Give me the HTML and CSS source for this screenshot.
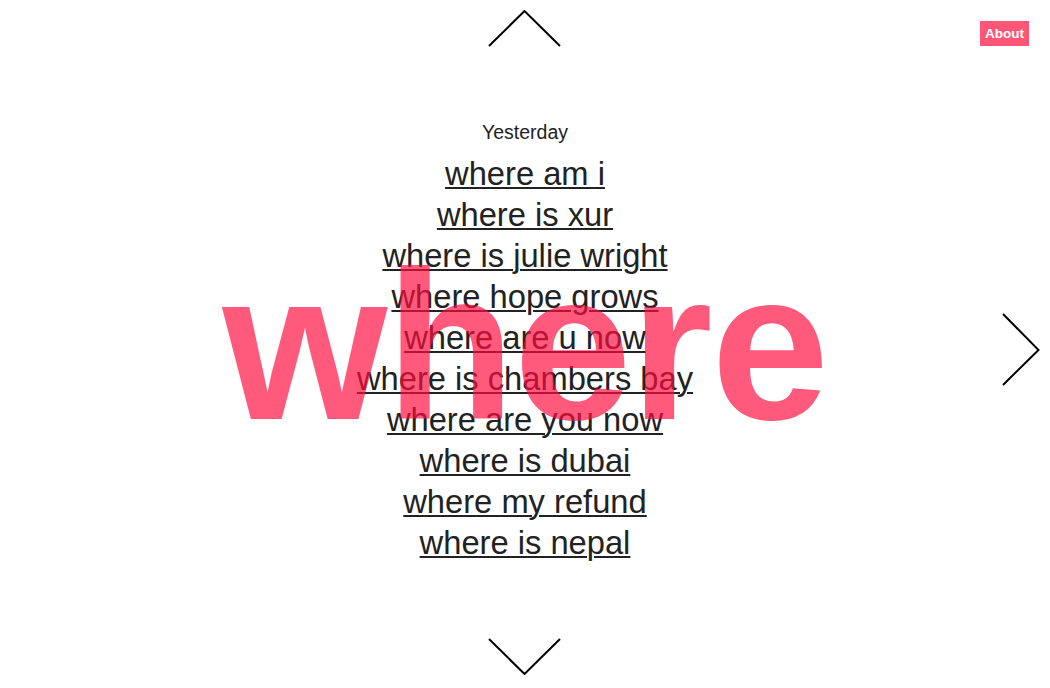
FILE: index.html
```html
<!DOCTYPE html>
<html lang="en">
<head>
<meta charset="utf-8">
<title>where</title>
<link rel="stylesheet" href="styles.css">
</head>
<body>
<div class="page">
  <main class="content">
    <div class="day">Yesterday</div>
    <ul class="queries">
      <li><a href="#">where am i</a></li>
      <li><a href="#">where is xur</a></li>
      <li><a href="#">where is julie wright</a></li>
      <li><a href="#">where hope grows</a></li>
      <li><a href="#">where are u now</a></li>
      <li><a href="#">where is chambers bay</a></li>
      <li><a href="#">where are you now</a></li>
      <li><a href="#">where is dubai</a></li>
      <li><a href="#">where my refund</a></li>
      <li><a href="#">where is nepal</a></li>
    </ul>
  </main>
  <div class="big-word">where</div>
  <a class="nav nav-up" href="#" aria-label="Previous day">
    <svg width="74" height="38" viewBox="0 0 74 38"><polyline points="1,36 36.5,1 72,36" fill="none" stroke="#000" stroke-width="2"/></svg>
  </a>
  <a class="nav nav-down" href="#" aria-label="Next day">
    <svg width="74" height="38" viewBox="0 0 74 38"><polyline points="1,2 36.5,37 72,2" fill="none" stroke="#000" stroke-width="2"/></svg>
  </a>
  <a class="nav nav-right" href="#" aria-label="Next word">
    <svg width="42" height="76" viewBox="0 0 42 76"><polyline points="3,2 38.5,38 3,73" fill="none" stroke="#000" stroke-width="2"/></svg>
  </a>
  <a class="about" href="#">About</a>
</div>
</body>
</html>
```

FILE: styles.css
```css
html, body {
  margin: 0;
  padding: 0;
  background: #fff;
}

body {
  font-family: "Liberation Sans", Arial, Helvetica, sans-serif;
  color: #222;
}

.page {
  position: relative;
  width: 100%;
  height: 688px;
  overflow: hidden;
}

.content {
  height: 100%;
  display: flex;
  flex-direction: column;
  align-items: center;
  justify-content: center;
  padding-bottom: 14px;
  box-sizing: border-box;
}

.day {
  font-size: 19.5px;
  line-height: 41px;
}

.queries {
  list-style: none;
  margin: 0;
  padding: 0;
  text-align: center;
}

.queries li {
  font-size: 32.7px;
  line-height: 41px;
}

.queries a {
  color: #222;
  text-decoration: underline;
  text-decoration-thickness: 2px;
  text-underline-offset: 2px;
}

.big-word {
  position: absolute;
  left: 0;
  right: 0;
  top: 240px;
  text-align: center;
  font-weight: bold;
  font-size: 212px;
  line-height: 1;
  letter-spacing: -1.5px;
  color: rgba(255, 12, 61, 0.68);
  pointer-events: none;
}

.nav {
  position: absolute;
  display: block;
  line-height: 0;
}

.nav-up {
  top: 10px;
  left: calc(50% - 37px);
}

.nav-down {
  top: 637px;
  left: calc(50% - 37px);
}

.nav-right {
  top: 312px;
  right: 8px;
}

.about {
  position: absolute;
  top: 21px;
  right: 21px;
  width: 49px;
  height: 25px;
  background: #ff5577;
  color: #fff;
  font-weight: bold;
  font-size: 13.5px;
  line-height: 25px;
  text-align: center;
  text-decoration: none;
}
```
